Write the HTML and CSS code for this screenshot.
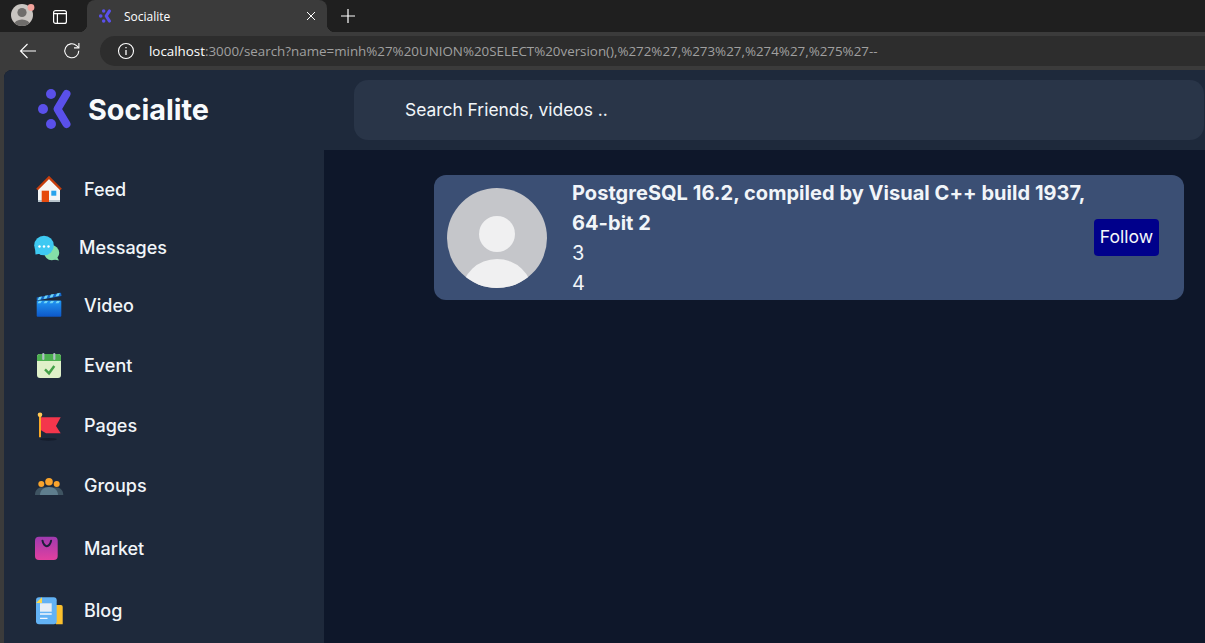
FILE: index.html
```html
<!DOCTYPE html>
<html lang="en">
<head>
<meta charset="utf-8">
<title>Socialite</title>
<link rel="stylesheet" href="styles.css">
</head>
<body>
<div class="browser">
  <div class="tabstrip">
    <svg class="profile" width="24" height="24" viewBox="0 0 24 24">
      <defs><clipPath id="pc"><circle cx="11" cy="12" r="11"/></clipPath></defs>
      <circle cx="11" cy="12" r="11" fill="#c9c5c1"/>
      <g clip-path="url(#pc)" fill="#6f6d6b">
        <circle cx="11" cy="9.5" r="4.6"/>
        <ellipse cx="11" cy="22" rx="8" ry="5.5"/>
      </g>
      <circle cx="20" cy="4.5" r="3.4" fill="#f3a39c"/>
    </svg>
    <svg class="tabs-icon" width="16" height="16" viewBox="0 0 16 16" fill="none" stroke="#fff" stroke-width="1.2">
      <rect x="1.6" y="1.6" width="12.8" height="12.8" rx="2"/>
      <path d="M1.6 4.6h12.8M5.4 4.6v9.8"/>
    </svg>
    <div class="tab">
      <svg class="favicon" width="14" height="16" viewBox="0 0 36 36">
        <g fill="#5a50ea"><circle cx="12" cy="5" r="4.6"/><circle cx="4.5" cy="18" r="4.6"/><circle cx="12" cy="31" r="4.6"/></g>
        <path d="M27 5 L18.500 18 L27 31" fill="none" stroke="#5a50ea" stroke-width="8" stroke-linecap="round" stroke-linejoin="round"/>
      </svg>
      <span class="tab-title">Socialite</span>
      <svg class="tab-close" width="10" height="10" viewBox="0 0 10 10" stroke="#fff" stroke-width="1"><path d="M1 1l8 8M9 1l-8 8"/></svg>
    </div>
    <svg class="new-tab" width="16" height="16" viewBox="0 0 16 16" stroke="#fff" stroke-width="1.2"><path d="M8 1v14M1 8h14"/></svg>
  </div>
  <div class="toolbar">
    <svg class="back" width="18" height="16" viewBox="0 0 18 16" fill="none" stroke="#fff" stroke-width="1.1"><path d="M17 8H1.500M8.500 1L1.500 8l7 7"/></svg>
    <svg class="reload" width="18" height="18" viewBox="0 0 18 18" fill="none" stroke="#fff" stroke-width="1.1"><path d="M15.800 8.800a7 7 0 1 1-2.300-5.200l2.300 2"/><path d="M15.900 1v4.900H11"/></svg>
    <div class="address">
      <svg class="info" width="18" height="18" viewBox="0 0 18 18" fill="none" stroke="#fff" stroke-width="1.100"><circle cx="9" cy="9" r="7.500"/><path d="M9 8v5" stroke-width="1.300"/><path d="M9 5v1.300" stroke-width="1.300"/></svg>
      <span class="url"><span class="host">localhost</span>:3000/search?name=minh%27%20UNION%20SELECT%20version(),%272%27,%273%27,%274%27,%275%27--</span>
    </div>
  </div>
</div>

<div class="app">
  <header class="topbar">
    <div class="brand">
      <svg class="brand-mark" width="36" height="42" viewBox="0 0 36 42">
        <g fill="#5a50ea"><circle cx="14" cy="6" r="5"/><circle cx="6" cy="21" r="5"/><circle cx="14" cy="36" r="5"/></g>
        <path d="M29.500 6 L20.500 21 L29.500 36" fill="none" stroke="#5a50ea" stroke-width="8" stroke-linecap="round" stroke-linejoin="round"/>
      </svg>
      <span class="brand-name">Socialite</span>
    </div>
    <div class="search">Search Friends, videos ..</div>
  </header>

  <div class="body">
    <nav class="sidebar">
      <a class="nav-item">
        <svg class="nav-icon" width="28" height="28" viewBox="0 0 28 28">
          <path d="M2 14L13 3l11 11v13H2z" fill="#f5f5f5"/>
          <rect x="2" y="25" width="22" height="2" fill="#b8c4cc"/>
          <path d="M1 14.500L13 2.500l12 12" fill="none" stroke="#c63d0c" stroke-width="2.400"/>
          <rect x="5.700" y="15.700" width="7.300" height="11.300" fill="#e64a0d"/>
          <rect x="15.300" y="15.700" width="5" height="5" fill="#29a3ec"/>
        </svg>
        <span>Feed</span>
      </a>
      <a class="nav-item nav-item-tight">
        <svg class="nav-icon" width="28" height="28" viewBox="0 0 28 28">
          <circle cx="17.700" cy="19.700" r="7.500" fill="#84e0a8"/>
          <path d="M23 24l2 3.500-5-1z" fill="#84e0a8"/>
          <circle cx="10" cy="12.500" r="9.800" fill="#3ec9f2"/>
          <path d="M1 14l.5 7.500 6-1z" fill="#3ec9f2"/>
          <g fill="#fff"><circle cx="5.500" cy="13.500" r="1.200"/><circle cx="10" cy="13.500" r="1.200"/><circle cx="14.500" cy="13.500" r="1.200"/></g>
        </svg>
        <span>Messages</span>
      </a>
      <a class="nav-item">
        <svg class="nav-icon" width="28" height="28" viewBox="0 0 28 28">
          <defs><linearGradient id="vg" x1="0" y1="0" x2="0" y2="1"><stop offset="0" stop-color="#2196f3"/><stop offset="1" stop-color="#0d57c8"/></linearGradient></defs>
          <rect x="0.700" y="9.500" width="24.600" height="16.300" rx="1" fill="url(#vg)"/>
          <path d="M0.700 6.500L25 1.700l.500 3.300L0.700 9.500z" fill="#1668c8"/>
          <path d="M3 6l3-.600-1.500 3.200-3 .600zM9 4.800l3-.600-1.500 3.200-3 .600zM15 3.600l3-.600-1.500 3.200-3 .600zM21 2.400l3-.600-1.500 3.200-3 .600z" fill="#6fd6f7"/>
          <path d="M3 10h3l-1.500 2.300h-3zM9 10h3l-1.500 2.300h-3zM15 10h3l-1.500 2.300h-3zM21 10h3l-1.500 2.300h-3z" fill="#6fd6f7"/>
        </svg>
        <span>Video</span>
      </a>
      <a class="nav-item">
        <svg class="nav-icon" width="28" height="28" viewBox="0 0 28 28">
          <rect x="1" y="3" width="24" height="24" rx="3" fill="#dff0c9"/>
          <path d="M1 10V6a3 3 0 0 1 3-3h18a3 3 0 0 1 3 3v4z" fill="#4caf50"/>
          <path d="M7.300 3v5M18.300 3v5" stroke="#b0bec5" stroke-width="2.200" stroke-linecap="round"/>
          <path d="M9 18.300l4 4 5.300-7.300" fill="none" stroke="#43a047" stroke-width="2.400"/>
        </svg>
        <span>Event</span>
      </a>
      <a class="nav-item">
        <svg class="nav-icon" width="28" height="28" viewBox="0 0 28 28">
          <ellipse cx="12.300" cy="28.300" rx="8.500" ry="1.400" fill="#151d2c"/>
          <path d="M5 6.300h19.700L20 15l4.700 7.300H10l-5-3z" fill="#f4364c"/>
          <path d="M4 3v23.300" stroke="#f9a825" stroke-width="2"/>
          <circle cx="4" cy="3.700" r="2.300" fill="#ffc857"/>
        </svg>
        <span>Pages</span>
      </a>
      <a class="nav-item">
        <svg class="nav-icon" width="28" height="28" viewBox="0 0 28 28">
          <path d="M-1 24c0-5 3-7.500 6.500-7.500h15C24 16.500 27.300 19 27.300 24z" fill="#3f5462"/>
          <path d="M4 24c0-5 4-8 9-8s9 3 9 8z" fill="#5f7e8e"/>
          <g fill="#f9a42c"><circle cx="13" cy="10.700" r="3.800"/><circle cx="5.300" cy="13" r="3"/><circle cx="20.700" cy="13" r="3"/></g>
        </svg>
        <span>Groups</span>
      </a>
      <a class="nav-item">
        <svg class="nav-icon" width="28" height="28" viewBox="0 0 28 28">
          <defs><linearGradient id="mg" x1="0" y1="0" x2="0" y2="1"><stop offset="0" stop-color="#a03ab0"/><stop offset="1" stop-color="#e2409f"/></linearGradient></defs>
          <rect x="-1" y="2.700" width="22.700" height="23.300" rx="4" fill="url(#mg)"/>
          <path d="M6.500 6.700c.5 3.500 2.800 5.500 4.300 5.500s3.800-2 4.300-5.500" fill="none" stroke="#1d1f3c" stroke-width="2" stroke-linecap="round"/>
        </svg>
        <span>Market</span>
      </a>
      <a class="nav-item">
        <svg class="nav-icon" width="28" height="28" viewBox="0 0 28 28">
          <path d="M17 9h8a1.700 1.700 0 0 1 1.700 1.700v17.600H20z" fill="#fbc02d"/>
          <rect x="0" y="1.300" width="20.700" height="27" rx="3" fill="#62b2f5"/>
          <path d="M0 7l6-5.700V7z" fill="#fbd74a"/>
          <rect x="4" y="7.300" width="11.700" height="8.400" fill="#e6eef6"/>
          <path d="M4 18h11.700M4 22.300h7.500" stroke="#f4f8fc" stroke-width="1.300"/>
        </svg>
        <span>Blog</span>
      </a>
    </nav>

    <main class="results">
      <article class="card">
        <svg class="avatar" width="100" height="100" viewBox="0 0 100 100">
          <defs><clipPath id="ac"><circle cx="50" cy="50" r="50"/></clipPath></defs>
          <circle cx="50" cy="50" r="50" fill="#c5c6ca"/>
          <g clip-path="url(#ac)" fill="#f0f0f1">
            <circle cx="50" cy="46" r="18"/>
            <ellipse cx="50" cy="104" rx="35" ry="33"/>
          </g>
        </svg>
        <div class="card-text">
          <h2 class="card-title">PostgreSQL 16.2, compiled by Visual C++ build 1937, 64-bit 2</h2>
          <p class="card-line">3</p>
          <p class="card-line">4</p>
        </div>
        <button class="follow" type="button">Follow</button>
      </article>
    </main>
  </div>
</div>
</body>
</html>
```
FILE: styles.css
```css
* { box-sizing: border-box; }

html, body {
  margin: 0;
  height: 100%;
  overflow: hidden;
}

body {
  display: flex;
  flex-direction: column;
  background: #3b3b3b;
  font-family: Inter, "Liberation Sans", sans-serif;
  color: #f5f7fa;
}

/* browser chrome */
.browser { flex: none; height: 70px; }

.tabstrip {
  height: 32px;
  background: #1f1f1f;
  display: flex;
  align-items: center;
  padding-left: 11px;
}

.profile { flex: none; margin-top: -2px; }
.tabs-icon { flex: none; margin-left: 17px; margin-top: 1px; }

.tab {
  position: relative;
  flex: none;
  align-self: stretch;
  width: 240px;
  margin-left: 19px;
  background: #3b3b3b;
  border-radius: 8px 8px 0 0;
  display: flex;
  align-items: center;
  padding-left: 12px;
  color: #fff;
}

.tab::before,
.tab::after {
  content: "";
  position: absolute;
  bottom: 0;
  width: 8px;
  height: 8px;
}
.tab::before { left: -8px; background: radial-gradient(circle at 0 0, transparent 8px, #3b3b3b 8.500px); }
.tab::after { right: -8px; background: radial-gradient(circle at 100% 0, transparent 8px, #3b3b3b 8.500px); }

.favicon { flex: none; }
.tab-title {
  font-family: "Open Sans", "Liberation Sans", sans-serif;
  font-size: 12px;
  margin-left: 11px;
  flex: 1;
}
.tab-close { flex: none; margin-right: 11px; }
.new-tab { flex: none; margin-left: 13px; }

.toolbar {
  height: 38px;
  display: flex;
  align-items: center;
  padding: 4px 0 4px 19px;
}
.back { flex: none; }
.reload { flex: none; margin-left: 26px; }

.address {
  flex: 1;
  margin-left: 19px;
  height: 30px;
  background: #2d2d2d;
  border-radius: 15px 0 0 15px;
  display: flex;
  align-items: center;
  padding-left: 17px;
  white-space: nowrap;
  overflow: hidden;
}
.info { flex: none; }
.url {
  margin-left: 14px;
  font-family: "Open Sans", "Liberation Sans", sans-serif;
  font-size: 13.370px;
  color: #a0a0a0;
}
.host { color: #fff; }

/* application */
.app {
  flex: 1;
  min-height: 0;
  margin-left: 4px;
  display: flex;
  flex-direction: column;
  background: #0e172a;
  border-radius: 8px 0 0 0;
  overflow: hidden;
}

.topbar {
  flex: none;
  height: 80px;
  background: #1e293b;
  display: flex;
  align-items: center;
}

.brand {
  flex: none;
  width: 350px;
  display: flex;
  align-items: center;
  padding-left: 33px;
}
.brand-mark { flex: none; margin-top: -2px; }
.brand-name {
  margin: -2px 0 0 15px;
  font-size: 28.800px;
  font-weight: 700;
  color: #f8fafc;
}

.search {
  flex: 1;
  height: 60px;
  margin-right: 1px;
  background: #293548;
  border-radius: 14px;
  display: flex;
  align-items: center;
  padding: 0 0 2px 51px;
  font-size: 17.400px;
  color: #f1f5f9;
}

.body {
  flex: 1;
  min-height: 0;
  display: flex;
}

.sidebar {
  flex: none;
  width: 320px;
  background: #1e293b;
  padding-top: 10px;
  display: grid;
  grid-template-rows: 58px 58px 58px 62px 58px 62px 64px 60px;
  align-content: start;
}

.nav-item {
  display: flex;
  align-items: center;
  gap: 20px;
  padding-left: 32px;
  font-size: 18px;
  font-weight: 500;
  color: #f1f5f9;
}
.nav-item-tight { padding-left: 30px; gap: 17px; }
.nav-icon { flex: none; overflow: visible; }

.results {
  flex: 1;
  min-width: 0;
  padding: 25px 21px 0 110px;
}

.card {
  height: 125px;
  background: #3b4f74;
  border-radius: 12px;
  display: flex;
  align-items: center;
  padding: 0 25px 0 13px;
}

.avatar { flex: none; }

.card-text {
  flex: 1;
  min-width: 0;
  margin-left: 25px;
  padding-right: 6px;
  font-size: 20px;
  line-height: 30px;
  color: #f1f5f9;
}
.card-title {
  margin: 0;
  font-size: 20px;
  line-height: 30px;
  font-weight: 700;
  letter-spacing: 0.040px;
}
.card-line { margin: 0; }

.follow {
  flex: none;
  width: 65px;
  height: 37px;
  padding: 0 0 2px;
  border: 0;
  border-radius: 4px;
  background: #00008b;
  color: #f5f7fa;
  font-family: inherit;
  font-size: 17.600px;
}
```
